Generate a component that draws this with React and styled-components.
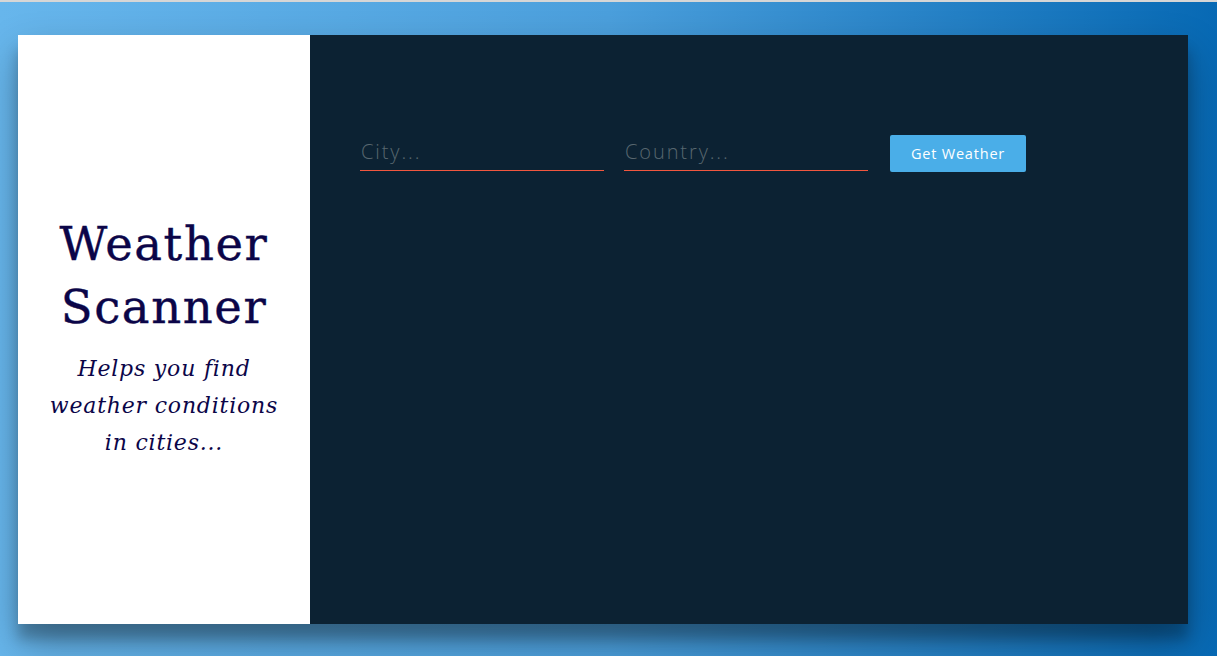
import React from "react";
import styled, { createGlobalStyle } from "styled-components";

const Global = createGlobalStyle`
  html, body { margin: 0; padding: 0; height: 100%; }
  body {
    border-top: 2px solid #d6d6d6;
    box-sizing: border-box;
    background: linear-gradient(to right, #67b6ec 0%, #4b9fdc 50%, #0769b4 100%);
    overflow: hidden;
  }
  #root { height: 100%; }
`;

const Page = styled.div`
  height: 654px;
  padding: 33px 29px 0 18px;
  box-sizing: border-box;
`;

const Card = styled.div`
  display: flex;
  height: 589px;
  box-shadow: 0 19px 38px rgba(0, 0, 0, 0.3), 0 15px 12px rgba(0, 0, 0, 0.22);
`;

const Intro = styled.div`
  width: 292px;
  flex: none;
  background: #ffffff;
  display: flex;
  flex-direction: column;
  justify-content: center;
  align-items: center;
  text-align: center;
  color: #0b0548;
  padding-top: 14px;
  box-sizing: border-box;
`;

const Title = styled.h1`
  margin: 0;
  font-family: "DejaVu Serif", serif;
  font-weight: normal;
  font-size: 46.5px;
  line-height: 63px;
  letter-spacing: 1.6px;
  -webkit-text-stroke: 0.4px #0b0548;
`;

const Subtitle = styled.p`
  margin: 11px 0 0;
  font-family: "DejaVu Serif", serif;
  font-style: italic;
  font-size: 22px;
  line-height: 37px;
  letter-spacing: 0.8px;
`;

const Main = styled.div`
  flex: 1;
  background: #0c2233;
  padding: 100px 50px 0;
`;

const Form = styled.form`
  display: flex;
  align-items: flex-start;
`;

const Field = styled.input`
  width: 244px;
  height: 36px;
  box-sizing: border-box;
  margin-right: ${(p) => p.$gap}px;
  background: transparent;
  border: none;
  border-bottom: 1px solid #f2573f;
  outline: none;
  padding: 0 1px 3px;
  font-family: "Open Sans", sans-serif;
  font-weight: 300;
  font-size: 20px;
  letter-spacing: 1.9px;
  color: #ffffff;
  &::placeholder { color: #58676f; }
`;

const Button = styled.button`
  height: 37px;
  width: 136px;
  border: none;
  border-radius: 2px;
  background: #4aaee8;
  color: #ffffff;
  font-family: "Open Sans", sans-serif;
  font-size: 14.5px;
  letter-spacing: 0.8px;
  padding: 0;
  cursor: pointer;
`;

export default function App() {
  return (
    <>
      <Global />
      <Page>
        <Card>
          <Intro>
            <Title>Weather<br />Scanner</Title>
            <Subtitle>Helps you find<br />weather conditions<br />in cities...</Subtitle>
          </Intro>
          <Main>
            <Form onSubmit={(e) => e.preventDefault()}>
              <Field $gap={20} placeholder="City..." />
              <Field $gap={22} placeholder="Country..." />
              <Button>Get Weather</Button>
            </Form>
          </Main>
        </Card>
      </Page>
    </>
  );
}
